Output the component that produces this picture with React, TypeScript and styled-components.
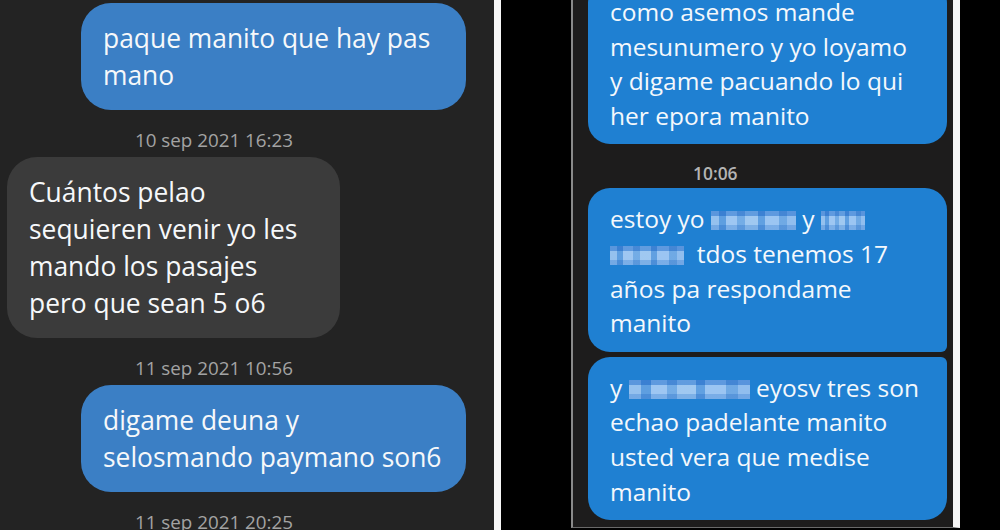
import styled, { createGlobalStyle } from 'styled-components'

const GlobalStyle = createGlobalStyle`
  html, body {
    margin: 0;
    padding: 0;
    background: #000;
  }
  body {
    font-family: "Open Sans", "Noto Sans", "DejaVu Sans", sans-serif;
  }
`

const Page = styled.div`
  display: flex;
  width: 1000px;
  height: 530px;
  overflow: hidden;
  background: #000;
`

const LeftShot = styled.div`
  width: 494px;
  height: 530px;
  flex: none;
  background: #232323;
  border-right: 7px solid #f7f7f7;
  overflow: hidden;
`

const LeftThread = styled.div`
  display: flex;
  flex-direction: column;
  padding: 3px 28px 0 7px;
`

const RightShot = styled.div`
  width: 380px;
  height: 527px;
  flex: none;
  margin-left: 70px;
  background: #1d1c1c;
  border-left: 2px solid #8a8a8a;
  border-right: 7px solid #f4f4f4;
  border-bottom: 1px solid #6a6a6a;
  overflow: hidden;
`

const RightThread = styled.div`
  display: flex;
  flex-direction: column;
  margin-top: -19px;
  padding: 0 6px 0 15px;
`

const Bubble = styled.div<{ $tone: 'out' | 'in'; $width: number }>`
  align-self: ${p => (p.$tone === 'out' ? 'flex-end' : 'flex-start')};
  width: ${p => p.$width}px;
  box-sizing: border-box;
  padding: 17px 10px 16px 22px;
  border-radius: 30px;
  background: ${p => (p.$tone === 'out' ? '#3b7fc5' : '#3b3b3b')};
  color: #f6f8fa;
  font-size: 26.4px;
  line-height: 37px;
  white-space: pre-line;
`

const PhoneBubble = styled.div<{ $topRight?: number; $bottomRight?: number }>`
  box-sizing: border-box;
  padding: 14px 10px 11px 22px;
  border-radius: 22px;
  border-top-right-radius: ${p => p.$topRight ?? 22}px;
  border-bottom-right-radius: ${p => p.$bottomRight ?? 22}px;
  background: #1f80d2;
  color: #f4f8fc;
  font-size: 24.5px;
  line-height: 34.6px;
  white-space: pre-line;
  & + & {
    margin-top: 5px;
  }
`

const Stamp = styled.div`
  height: 24px;
  margin: 18px 0 5px;
  padding-left: 128px;
  color: #a3a3a3;
  font-size: 18.8px;
  line-height: 24px;
`

const PhoneStamp = styled.div`
  height: 22px;
  margin: 18px 0 4px;
  padding-left: 105px;
  color: #b4b4b4;
  font-size: 17.4px;
  font-weight: 600;
  line-height: 22px;
`

// pixelated name, blurred out in the original capture
const Mosaic = styled.span<{ $w: number }>`
  display: inline-block;
  width: ${p => p.$w}px;
  height: 19px;
  vertical-align: -2px;
  filter: blur(0.6px);
  background-color: rgba(140, 190, 236, 0.7);
  background-image:
    linear-gradient(90deg,
      rgba(226, 238, 252, 0.9) 0 10%,
      rgba(120, 178, 232, 0.5) 10% 18%,
      rgba(236, 244, 255, 0.95) 18% 31%,
      rgba(176, 210, 242, 0.7) 31% 40%,
      rgba(244, 248, 255, 0.9) 40% 55%,
      rgba(128, 182, 234, 0.5) 55% 63%,
      rgba(232, 242, 255, 0.95) 63% 80%,
      rgba(168, 205, 240, 0.7) 80% 90%,
      rgba(220, 234, 252, 0.9) 90% 100%),
    linear-gradient(180deg, rgba(31, 128, 210, 0.45) 0 28%, transparent 28% 72%, rgba(31, 128, 210, 0.25) 72%);
  background-blend-mode: multiply;
`

const App = () => {
  return (
    <Page>
      <GlobalStyle />
      <LeftShot>
        <LeftThread>
          <Bubble $tone="out" $width={385}>{'paque manito que hay pas\nmano'}</Bubble>
          <Stamp>10 sep 2021 16:23</Stamp>
          <Bubble $tone="in" $width={333}>
            {'Cuántos pelao\nsequieren venir yo les\nmando los pasajes\npero que sean 5 o6'}
          </Bubble>
          <Stamp>11 sep 2021 10:56</Stamp>
          <Bubble $tone="out" $width={385}>{'digame deuna y\nselosmando paymano son6'}</Bubble>
          <Stamp>11 sep 2021 20:25</Stamp>
        </LeftThread>
      </LeftShot>
      <RightShot>
        <RightThread>
          <PhoneBubble>
            {'como asemos mande\nmesunumero y yo loyamo\ny digame pacuando lo qui\nher epora manito'}
          </PhoneBubble>
          <PhoneStamp>10:06</PhoneStamp>
          <PhoneBubble $bottomRight={6}>
            estoy yo <Mosaic $w={85} /> y <Mosaic $w={44} />
            {'\n'}
            <Mosaic $w={74} />&nbsp; tdos tenemos 17{'\n'}años pa respondame{'\n'}manito
          </PhoneBubble>
          <PhoneBubble $topRight={6}>
            y <Mosaic $w={121} /> eyosv tres son{'\n'}echao padelante manito{'\n'}usted vera que medise{'\n'}manito
          </PhoneBubble>
        </RightThread>
      </RightShot>
    </Page>
  )
}

export default App
